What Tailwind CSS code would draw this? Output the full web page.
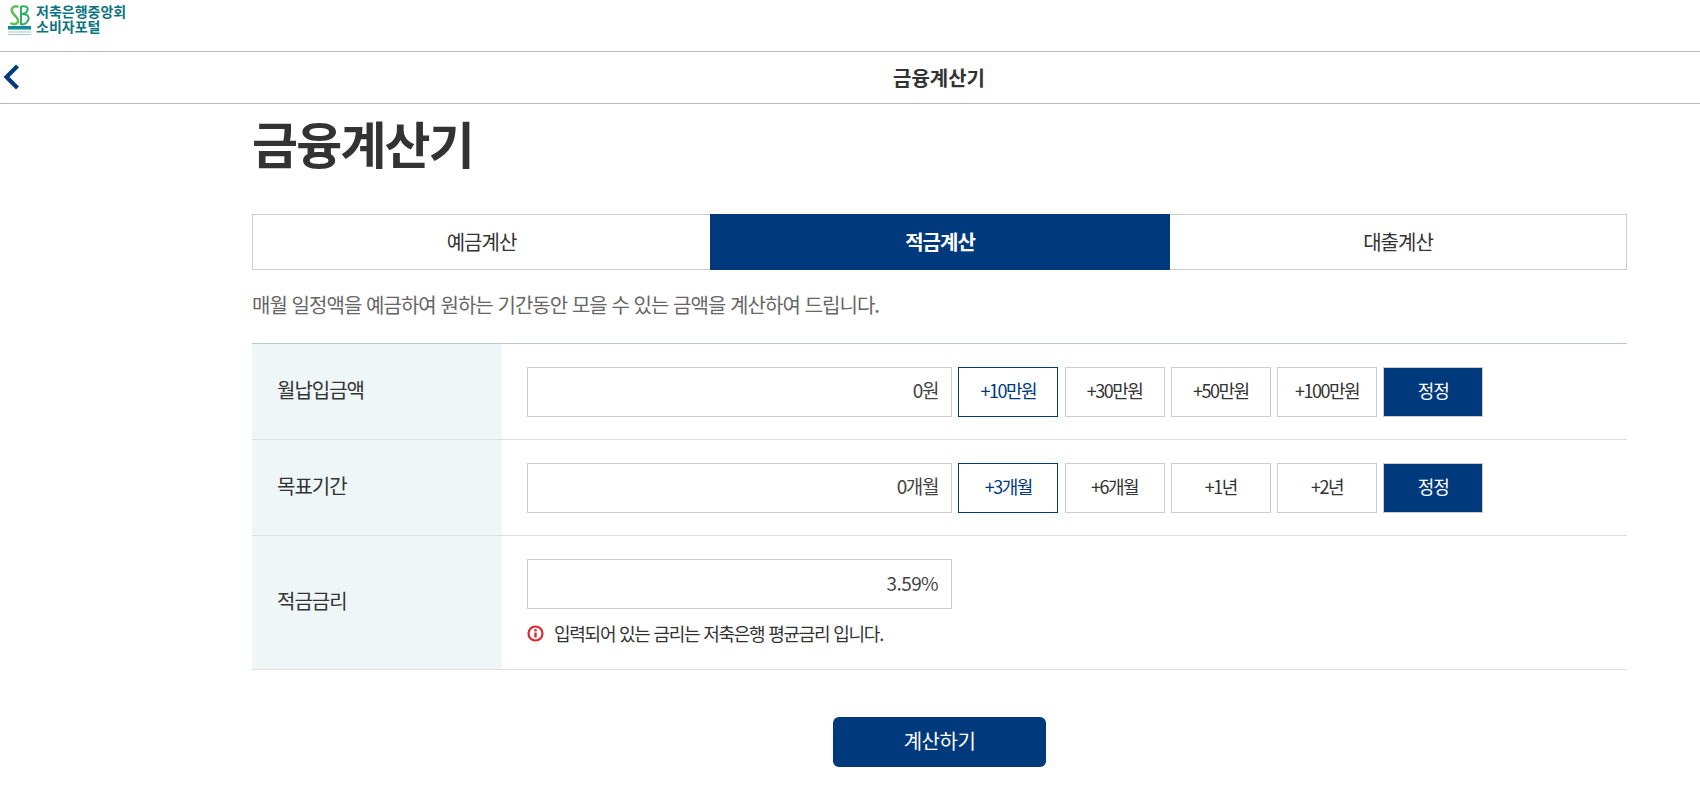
<!DOCTYPE html>
<html lang="ko">
<head>
  <meta charset="UTF-8">
  <title>금융계산기</title>
  <script src="https://cdn.jsdelivr.net/npm/@tailwindcss/browser@4"></script>
</head>
<body class="bg-white font-['Noto_Sans_CJK_KR','Noto_Sans',sans-serif] text-[#333] overflow-hidden">
  <!-- 로고 -->
  <header class="h-[51px] flex items-start pl-2 pt-[5px]">
    <svg class="w-[23px] h-[31px] shrink-0" viewBox="0 0 23 31">
      <path d="M10.500 1.800C5 0 2.500 4 4.500 7.500s6.500 5.500 5.500 9-5.500 3-7.500 1.500" fill="none" stroke="#62bf55" stroke-width="2.600"/>
      <path d="M13 1V20M13 1.500c5-1 7.500 .8 6.500 3.800s-3.500 3.700-6.500 3.700c5-.5 8.500 1.800 7.500 5.200s-3.500 5.300-7.500 5.300" fill="none" stroke="#2fae68" stroke-width="2"/>
      <rect x="0" y="21" width="23" height="3.500" fill="#0e8a96"/>
      <rect x="0" y="26.500" width="23" height="1" fill="#a9c3c8"/>
      <rect x="0" y="29" width="23" height="1" fill="#a9c3c8"/>
    </svg>
    <div class="ml-[5px] -mt-[1px] text-[14px] leading-[15px] font-bold text-[#0b7480]">저축은행중앙회<br>소비자포털</div>
  </header>

  <!-- 상단 타이틀 바 -->
  <div class="h-[53px] border-y border-[#bbb] relative flex items-center justify-center pl-[178px]">
    <svg class="absolute left-[2px] top-[11px] w-[18px] h-[28px]" viewBox="0 0 18 28">
      <path d="M15.500 3 4.500 14l11 11" fill="none" stroke="#003a7d" stroke-width="4.200"/>
    </svg>
    <span class="text-[20px] font-bold">금융계산기</span>
  </div>

  <main class="w-[1375px] ml-[252px]">
    <h1 class="h-[110px] text-[50px] leading-[76px] font-bold tracking-[-1.8px]">금융계산기</h1>

    <!-- 탭 -->
    <div class="grid grid-cols-[458px_460px_457px] h-[56px] text-[20px] tracking-[-1px]">
      <div class="border border-r-0 border-[#ccc] flex items-center justify-center">예금계산</div>
      <div class="bg-[#003a7d] text-white font-bold flex items-center justify-center">적금계산</div>
      <div class="border border-l-0 border-[#ccc] flex items-center justify-center">대출계산</div>
    </div>

    <p class="h-[73px] pb-[4px] flex items-center text-[20px] tracking-[-0.95px] text-[#666]">매월 일정액을 예금하여 원하는 기간동안 모을 수 있는 금액을 계산하여 드립니다.</p>

    <!-- 입력 폼 -->
    <div class="border-t border-[#b8c8dc] text-[20px] tracking-[-1px]">
      <div class="grid grid-cols-[250px_1fr] h-[96px] border-b border-[#ddd]">
        <div class="bg-[#eef6f8] flex items-center pl-[25px] pb-[4px]">월납입금액</div>
        <div class="flex items-center pl-[25px] gap-[6.25px]">
          <div class="w-[425px] h-[50px] pb-[2px] border border-[#ccc] flex items-center justify-end pr-[13px] text-[19px] tracking-[-1.4px] text-[#444]">0원</div>
          <button class="w-[100px] h-[50px] pb-[2px] border border-[#003a7d] text-[#003a7d] text-[18px] tracking-[-1.5px]">+10만원</button>
          <button class="w-[100px] h-[50px] pb-[2px] border border-[#ccc] text-[18px] tracking-[-1.5px]">+30만원</button>
          <button class="w-[100px] h-[50px] pb-[2px] border border-[#ccc] text-[18px] tracking-[-1.5px]">+50만원</button>
          <button class="w-[100px] h-[50px] pb-[2px] border border-[#ccc] text-[18px] tracking-[-1.5px]">+100만원</button>
          <button class="w-[100px] h-[50px] pb-[2px] border border-[#ccc] bg-[#003a7d] text-white text-[18px] tracking-[-1px]">정정</button>
        </div>
      </div>
      <div class="grid grid-cols-[250px_1fr] h-[96px] border-b border-[#ddd]">
        <div class="bg-[#eef6f8] flex items-center pl-[25px] pb-[4px]">목표기간</div>
        <div class="flex items-center pl-[25px] gap-[6.25px]">
          <div class="w-[425px] h-[50px] pb-[2px] border border-[#ccc] flex items-center justify-end pr-[13px] text-[19px] tracking-[-1.4px] text-[#444]">0개월</div>
          <button class="w-[100px] h-[50px] pb-[2px] border border-[#003a7d] text-[#003a7d] text-[18px] tracking-[-1.5px]">+3개월</button>
          <button class="w-[100px] h-[50px] pb-[2px] border border-[#ccc] text-[18px] tracking-[-1.5px]">+6개월</button>
          <button class="w-[100px] h-[50px] pb-[2px] border border-[#ccc] text-[18px] tracking-[-1.5px]">+1년</button>
          <button class="w-[100px] h-[50px] pb-[2px] border border-[#ccc] text-[18px] tracking-[-1.5px]">+2년</button>
          <button class="w-[100px] h-[50px] pb-[2px] border border-[#ccc] bg-[#003a7d] text-white text-[18px] tracking-[-1px]">정정</button>
        </div>
      </div>
      <div class="grid grid-cols-[250px_1fr] h-[134px] border-b border-[#ddd]">
        <div class="bg-[#eef6f8] flex items-center pl-[25px] pb-[4px]">적금금리</div>
        <div class="pl-[25px] pt-[23px]">
          <div class="w-[425px] h-[50px] pb-[2px] border border-[#ccc] flex items-center justify-end pr-[13px] text-[19px] tracking-[-0.6px] text-[#444]">3.59%</div>
          <div class="flex items-center gap-[10px] mt-[11px] text-[18px] tracking-[-1.25px] text-[#333]">
            <svg class="w-[17px] h-[17px] shrink-0" viewBox="0 0 17 17">
              <circle cx="8.500" cy="8.500" r="7" fill="none" stroke="#d9282f" stroke-width="2.200"/>
              <rect x="7.300" y="7.500" width="2.400" height="5" fill="#d9282f"/>
              <rect x="7.300" y="4.200" width="2.400" height="2.200" fill="#d9282f"/>
            </svg>
            <span>입력되어 있는 금리는 저축은행 평균금리 입니다.</span>
          </div>
        </div>
      </div>
    </div>

    <div class="flex justify-center mt-[47px]">
      <button class="w-[213px] h-[50px] pb-[2px] rounded-[6px] bg-[#003a7d] text-white text-[20px] tracking-[-0.5px]">계산하기</button>
    </div>
  </main>
</body>
</html>
